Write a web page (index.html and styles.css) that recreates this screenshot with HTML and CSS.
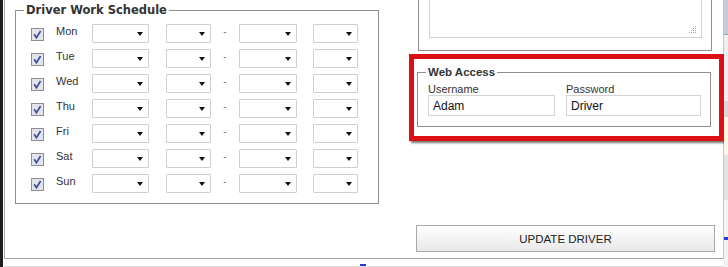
FILE: index.html
```html
<!DOCTYPE html>
<html>
<head>
<meta charset="utf-8">
<link rel="stylesheet" href="styles.css">
</head>
<body>
<div class="page">
  <div class="darkbar"></div>
  <div class="main">
    <div class="panel">
      <div class="col-left">
        <fieldset class="schedule">
          <legend>Driver Work Schedule</legend>
          <div class="rows">
            <div class="row">
              <svg class="cb" width="13" height="13" viewBox="0 0 13 13"><rect x=".5" y=".5" width="12" height="12" fill="#e3e4ea" stroke="#8c8d92"/><path d="M3.2 6.3 L5.4 9.6 L9.6 3" fill="none" stroke="#3d4c9c" stroke-width="1.7"/></svg>
              <span class="day">Mon</span>
              <div class="sel w57"></div><div class="sel w45 ml17"></div><span class="dash">-</span><div class="sel w58"></div><div class="sel w45 ml16"></div>
            </div>
            <div class="row">
              <svg class="cb" width="13" height="13" viewBox="0 0 13 13"><rect x=".5" y=".5" width="12" height="12" fill="#e3e4ea" stroke="#8c8d92"/><path d="M3.2 6.3 L5.4 9.6 L9.6 3" fill="none" stroke="#3d4c9c" stroke-width="1.7"/></svg>
              <span class="day">Tue</span>
              <div class="sel w57"></div><div class="sel w45 ml17"></div><span class="dash">-</span><div class="sel w58"></div><div class="sel w45 ml16"></div>
            </div>
            <div class="row">
              <svg class="cb" width="13" height="13" viewBox="0 0 13 13"><rect x=".5" y=".5" width="12" height="12" fill="#e3e4ea" stroke="#8c8d92"/><path d="M3.2 6.3 L5.4 9.6 L9.6 3" fill="none" stroke="#3d4c9c" stroke-width="1.7"/></svg>
              <span class="day">Wed</span>
              <div class="sel w57"></div><div class="sel w45 ml17"></div><span class="dash">-</span><div class="sel w58"></div><div class="sel w45 ml16"></div>
            </div>
            <div class="row">
              <svg class="cb" width="13" height="13" viewBox="0 0 13 13"><rect x=".5" y=".5" width="12" height="12" fill="#e3e4ea" stroke="#8c8d92"/><path d="M3.2 6.3 L5.4 9.6 L9.6 3" fill="none" stroke="#3d4c9c" stroke-width="1.7"/></svg>
              <span class="day">Thu</span>
              <div class="sel w57"></div><div class="sel w45 ml17"></div><span class="dash">-</span><div class="sel w58"></div><div class="sel w45 ml16"></div>
            </div>
            <div class="row">
              <svg class="cb" width="13" height="13" viewBox="0 0 13 13"><rect x=".5" y=".5" width="12" height="12" fill="#e3e4ea" stroke="#8c8d92"/><path d="M3.2 6.3 L5.4 9.6 L9.6 3" fill="none" stroke="#3d4c9c" stroke-width="1.7"/></svg>
              <span class="day">Fri</span>
              <div class="sel w57"></div><div class="sel w45 ml17"></div><span class="dash">-</span><div class="sel w58"></div><div class="sel w45 ml16"></div>
            </div>
            <div class="row">
              <svg class="cb" width="13" height="13" viewBox="0 0 13 13"><rect x=".5" y=".5" width="12" height="12" fill="#e3e4ea" stroke="#8c8d92"/><path d="M3.2 6.3 L5.4 9.6 L9.6 3" fill="none" stroke="#3d4c9c" stroke-width="1.7"/></svg>
              <span class="day">Sat</span>
              <div class="sel w57"></div><div class="sel w45 ml17"></div><span class="dash">-</span><div class="sel w58"></div><div class="sel w45 ml16"></div>
            </div>
            <div class="row">
              <svg class="cb" width="13" height="13" viewBox="0 0 13 13"><rect x=".5" y=".5" width="12" height="12" fill="#e3e4ea" stroke="#8c8d92"/><path d="M3.2 6.3 L5.4 9.6 L9.6 3" fill="none" stroke="#3d4c9c" stroke-width="1.7"/></svg>
              <span class="day">Sun</span>
              <div class="sel w57"></div><div class="sel w45 ml17"></div><span class="dash">-</span><div class="sel w58"></div><div class="sel w45 ml16"></div>
            </div>
          </div>
        </fieldset>
      </div>
      <div class="col-right">
        <div class="notes-box">
          <div class="notes">
            <svg class="grip" width="8" height="8" viewBox="0 0 8 8" fill="#a8a8a8"><rect x="6" y="0" width="1" height="1"/><rect x="4" y="2" width="1" height="1"/><rect x="6" y="2" width="1" height="1"/><rect x="2" y="4" width="1" height="1"/><rect x="4" y="4" width="1" height="1"/><rect x="6" y="4" width="1" height="1"/><rect x="0" y="6" width="1" height="1"/><rect x="2" y="6" width="1" height="1"/><rect x="4" y="6" width="1" height="1"/><rect x="6" y="6" width="1" height="1"/></svg>
          </div>
        </div>
        <div class="highlight">
          <fieldset class="web">
            <legend>Web Access</legend>
            <div class="fields">
              <div class="field f1">
                <span class="lbl">Username</span>
                <div class="input">Adam</div>
              </div>
              <div class="field f2">
                <span class="lbl">Password</span>
                <div class="input">Driver</div>
              </div>
            </div>
          </fieldset>
        </div>
        <button class="update">UPDATE DRIVER</button>
      </div>
    </div>
    <div class="bottom-strip"><span class="blue"></span></div>
  </div>
  <div class="edge">
    <div class="e1"></div><div class="e2"></div><div class="e3"></div><div class="e4"></div><div class="e5"></div><div class="e6"></div><div class="e7"></div><div class="e8"></div>
  </div>
</div>
</body>
</html>
```
FILE: styles.css
```css
* { box-sizing: border-box; }
html, body { margin: 0; padding: 0; }
body {
  width: 728px;
  height: 267px;
  overflow: hidden;
  background: #fff;
  font-family: "Liberation Sans", Arial, sans-serif;
  color: #333;
}
.page {
  display: flex;
  height: 267px;
}
.darkbar {
  flex: none;
  width: 3px;
  margin-right: 1px;
  background: #1e1e1e;
}
.main {
  flex: none;
  width: 720px;
  display: flex;
  flex-direction: column;
}
.panel {
  flex: none;
  height: 259px;
  display: flex;
  border-left: 1px solid #a6a6a6;
  border-right: 1px solid #c9c9c9;
  border-bottom: 1px solid #a6a6a6;
}
.col-left {
  flex: none;
  margin-left: 10px;
  width: 364px;
}
.schedule {
  margin: 3px 0 0 0;
  width: 364px;
  border: 1px solid #8e8e8e;
  padding: 7px 0 10px 0;
}
.schedule legend {
  font-family: "DejaVu Sans", Verdana, sans-serif;
  font-weight: bold;
  font-size: 11.5px;
  line-height: 14px;
  color: #333;
  padding: 0 2px;
  margin-left: 8px;
}
.rows {
  display: flex;
  flex-direction: column;
  gap: 6px;
  padding-left: 15px;
}
.row {
  display: flex;
  align-items: flex-start;
  height: 19px;
}
.cb {
  flex: none;
  margin-top: 4px;
  display: block;
}
.day {
  flex: none;
  width: 36px;
  margin-left: 12px;
  margin-top: 1px;
  font-size: 11px;
  line-height: 13px;
  color: #333;
}
.sel {
  flex: none;
  position: relative;
  height: 19px;
  border: 1px solid #cfcfcf;
  border-radius: 1px;
  background: #fff;
}
.sel::after {
  content: "";
  position: absolute;
  right: 5px;
  top: 7px;
  border-style: solid;
  border-width: 4px 3.5px 0 3.5px;
  border-color: #111 transparent transparent transparent;
}
.w57 { width: 57px; }
.w45 { width: 45px; }
.w58 { width: 58px; }
.ml17 { margin-left: 17px; }
.ml16 { margin-left: 16px; }
.dash {
  flex: none;
  width: 28px;
  margin-top: 2px;
  text-align: center;
  font-size: 10px;
  line-height: 12px;
  color: #777;
}
.col-right {
  flex: none;
  width: 315px;
  margin-left: 30px;
  display: flex;
  flex-direction: column;
}
.notes-box {
  margin-left: 9px;
  width: 294px;
  height: 51px;
  border: 1px solid #8e8e8e;
  border-top: none;
}
.notes {
  position: relative;
  margin-left: 10px;
  width: 273px;
  height: 38px;
  border: 1px solid #d2d2d2;
  border-top: none;
}
.grip {
  position: absolute;
  right: 4px;
  bottom: 3px;
}
.highlight {
  margin-top: 3px;
  width: 315px;
  height: 87px;
  border: 5px solid #dc0f14;
  box-shadow: 2px 2px 2px rgba(0, 0, 0, 0.55);
  padding-left: 3px;
}
.web {
  margin: 6px 0 0 0;
  width: 294px;
  border: 1px solid #8e8e8e;
  padding: 4px 0 10px 0;
}
.web legend {
  font-family: "Liberation Sans", Arial, sans-serif;
  font-weight: bold;
  font-size: 11.5px;
  line-height: 14px;
  color: #333;
  padding: 0 2px;
  margin-left: 8px;
}
.fields {
  display: flex;
  gap: 11px;
  padding-left: 10px;
}
.field {
  display: flex;
  flex-direction: column;
}
.f1 { width: 127px; }
.f2 { width: 135px; }
.lbl {
  font-size: 11px;
  line-height: 13px;
  color: #333;
  margin-bottom: -1px;
}
.input {
  height: 21px;
  border: 1px solid #d4d4d4;
  padding: 1px 0 0 4px;
  font-size: 12px;
  line-height: 19px;
  color: #111;
}
.update {
  margin-top: auto;
  margin-bottom: 6px;
  margin-left: 7px;
  width: 299px;
  height: 27px;
  border: 1px solid #a9a9a9;
  border-radius: 0;
  background: linear-gradient(#fefefe, #e9e9e9);
  font-family: "Liberation Sans", Arial, sans-serif;
  font-size: 11.5px;
  color: #222;
  padding: 0;
}
.bottom-strip {
  flex: 1;
  display: flex;
  align-items: flex-end;
  padding-left: 356px;
  border-bottom: 1px solid #dcdcdc;
}
.blue {
  display: block;
  width: 6px;
  height: 2px;
  background: #1f3fd0;
}
.edge {
  flex: none;
  width: 4px;
  display: flex;
  flex-direction: column;
  background: #f2f2f2;
}
.e1 { height: 34px; background: #c3cbd6; }
.e2 { height: 1px; background: #9aa3ad; }
.e3 { height: 66px; background: #eeeeee; }
.e4 { height: 16px; background: #d8d8d8; }
.e5 { height: 38px; background: #fbf7e4; }
.e6 { height: 45px; background: #e2e2e2; }
.e7 { height: 37px; background: #f4f4f4; }
.e8 { height: 3px; background: #1f3fd0; }
```
